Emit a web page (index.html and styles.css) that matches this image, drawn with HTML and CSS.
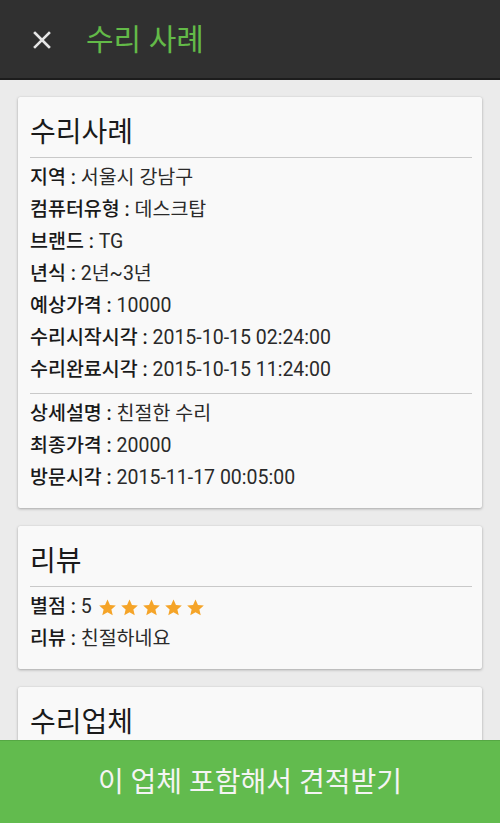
FILE: index.html
```html
<!DOCTYPE html>
<html lang="ko">
<head>
<meta charset="utf-8">
<link rel="stylesheet" href="styles.css">
</head>
<body>
<div class="app">
  <header class="topbar">
    <svg class="close" width="18" height="18" viewBox="0 0 18 18"><path d="M2 2 L16 16 M16 2 L2 16" stroke="#e6e6e6" stroke-width="2.6" stroke-linecap="square"/></svg>
    <h1 class="title">수리 사례</h1>
  </header>
  <main class="content">
    <section class="card">
      <h2 class="card-title">수리사례</h2>
      <div class="rows">
        <div class="row"><span class="label">지역 : </span><span class="value">서울시 강남구</span></div>
        <div class="row"><span class="label">컴퓨터유형 : </span><span class="value">데스크탑</span></div>
        <div class="row"><span class="label">브랜드 : </span><span class="value">TG</span></div>
        <div class="row"><span class="label">년식 : </span><span class="value">2년~3년</span></div>
        <div class="row"><span class="label">예상가격 : </span><span class="value">10000</span></div>
        <div class="row"><span class="label">수리시작시각 : </span><span class="value">2015-10-15 02:24:00</span></div>
        <div class="row"><span class="label">수리완료시각 : </span><span class="value">2015-10-15 11:24:00</span></div>
      </div>
      <div class="divider sub"></div>
      <div class="rows">
        <div class="row"><span class="label">상세설명 : </span><span class="value">친절한 수리</span></div>
        <div class="row"><span class="label">최종가격 : </span><span class="value">20000</span></div>
        <div class="row"><span class="label">방문시각 : </span><span class="value">2015-11-17 00:05:00</span></div>
      </div>
    </section>
    <section class="card">
      <h2 class="card-title">리뷰</h2>
      <div class="rows">
        <div class="row"><span class="label">별점 : </span><span class="value">5</span>
          <span class="stars">
            <svg viewBox="0 0 24 24"><path d="M12 1.8l3.1 6.9 7.4.7-5.6 5 1.7 7.4L12 18l-6.6 3.8 1.7-7.4-5.6-5 7.4-.7z"/></svg>
            <svg viewBox="0 0 24 24"><path d="M12 1.8l3.1 6.9 7.4.7-5.6 5 1.7 7.4L12 18l-6.6 3.8 1.7-7.4-5.6-5 7.4-.7z"/></svg>
            <svg viewBox="0 0 24 24"><path d="M12 1.8l3.1 6.9 7.4.7-5.6 5 1.7 7.4L12 18l-6.6 3.8 1.7-7.4-5.6-5 7.4-.7z"/></svg>
            <svg viewBox="0 0 24 24"><path d="M12 1.8l3.1 6.9 7.4.7-5.6 5 1.7 7.4L12 18l-6.6 3.8 1.7-7.4-5.6-5 7.4-.7z"/></svg>
            <svg viewBox="0 0 24 24"><path d="M12 1.8l3.1 6.9 7.4.7-5.6 5 1.7 7.4L12 18l-6.6 3.8 1.7-7.4-5.6-5 7.4-.7z"/></svg>
          </span>
        </div>
        <div class="row"><span class="label">리뷰 : </span><span class="value">친절하네요</span></div>
      </div>
    </section>
    <section class="card last">
      <h2 class="card-title plain">수리업체</h2>
    </section>
  </main>
  <footer class="cta">이 업체 포함해서 견적받기</footer>
</div>
</body>
</html>
```

FILE: styles.css
```css
* { box-sizing: border-box; }
html, body { margin: 0; padding: 0; }
body {
  font-family: Roboto, "Noto Sans CJK KR", sans-serif;
  background: #ebebeb;
  color: #222;
}
.app {
  height: 823px;
  display: flex;
  flex-direction: column;
  overflow: hidden;
}
.topbar {
  height: 80px;
  flex: none;
  background: #303030;
  border-bottom: 2px solid #1c1c1c;
  display: flex;
  align-items: center;
  padding-left: 33px;
  padding-top: 2px;
}
.close { display: block; }
.title {
  margin: 0 0 0 35px;
  font-size: 30px;
  font-weight: 400;
  color: #63ba48;
  line-height: 1;
}
.content {
  flex: 1;
  overflow: hidden;
  padding: 17px 18px 0 18px;
  display: flex;
  flex-direction: column;
  gap: 18px;
}
.card {
  flex: none;
  background: #f9f9f9;
  box-shadow: 0 1px 3px rgba(0,0,0,0.28), 0 0 1px rgba(0,0,0,0.12);
  border-radius: 2px;
  padding: 18px 10px 14px 12px;
}
.card.last { padding-bottom: 30px; }
.card-title {
  margin: 0;
  font-size: 28px;
  font-weight: 400;
  line-height: 36px;
  color: #1a1a1a;
  padding-bottom: 6px;
  border-bottom: 1.5px solid #c9c9c9;
}
.card-title.plain { border-bottom: none; }
.rows { padding-top: 4px; }
.row {
  font-size: 19.5px;
  line-height: 32px;
  height: 32px;
  display: flex;
  align-items: center;
  white-space: pre;
}
.label { font-weight: 500; color: #1a1a1a; }
.value { font-weight: 400; color: #2a2a2a; }
.divider.sub {
  margin-top: 7px;
  border-top: 1.5px solid #c9c9c9;
}
.stars {
  display: inline-flex;
  gap: 3px;
  margin-left: 6px;
}
.stars svg {
  width: 19px;
  height: 19px;
  fill: #f5a428;
}
.cta {
  height: 83px;
  flex: none;
  background: #62bb4e;
  color: #f4f4f4;
  font-size: 28px;
  display: flex;
  align-items: center;
  justify-content: center;
  padding-bottom: 4px;
  border-top: 1px solid #55a844;
}
```
